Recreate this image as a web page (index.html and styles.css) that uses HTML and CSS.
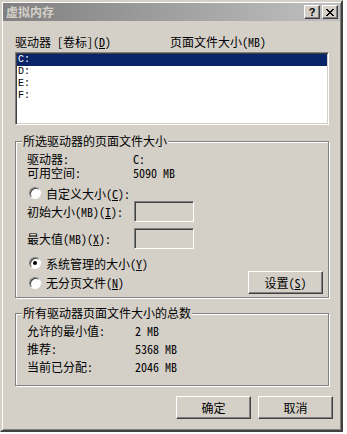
FILE: index.html
```html
<!DOCTYPE html>
<html lang="zh-CN">
<head>
    <meta charset="UTF-8">
    <title>虚拟内存</title>
    <link rel="stylesheet" href="styles.css">
</head>
<body>
    <div class="window">
        <div class="titlebar">
            <span class="title">虚拟内存</span>
            <div class="title-buttons">
                <span class="tbtn help">?</span>
                <span class="tbtn close">
                    <svg width="8" height="7" viewBox="0 0 8 7">
                        <path d="M0 0h2v1h1v1h2v-1h1v-1h2v1h-1v1h-1v1h-1v1h1v1h1v1h1v1h-2v-1h-1v-1h-2v1h-1v1h-2v-1h1v-1h1v-1h1v-1h-1v-1h-1v-1h-1z" fill="#000"/>
                    </svg>
                </span>
            </div>
        </div>

        <div class="content">
            <div class="list-head">
                <span class="col-drive">驱动器 [卷标](<u>D</u>)</span>
                <span class="col-size">页面文件大小(MB)</span>
            </div>
            <ul class="drive-list">
                <li class="selected">C:</li>
                <li>D:</li>
                <li>E:</li>
                <li>F:</li>
            </ul>

            <div class="group group-drive">
                <span class="legend">所选驱动器的页面文件大小</span>
                <div class="info-row"><span class="key">驱动器:</span><span class="val">C:</span></div>
                <div class="info-row"><span class="key">可用空间:</span><span class="val">5090 MB</span></div>
                <div class="radio-row custom">
                    <span class="radio"></span>
                    <span>自定义大小(<u>C</u>):</span>
                </div>
                <div class="field-row">
                    <span class="key">初始大小(MB)(<u>I</u>):</span>
                    <span class="textbox"></span>
                </div>
                <div class="field-row max">
                    <span class="key">最大值(MB)(<u>X</u>):</span>
                    <span class="textbox"></span>
                </div>
                <div class="radio-row system">
                    <span class="radio checked"></span>
                    <span>系统管理的大小(<u>Y</u>)</span>
                </div>
                <div class="last-row">
                    <div class="radio-row">
                        <span class="radio"></span>
                        <span>无分页文件(<u>N</u>)</span>
                    </div>
                    <span class="btn set-btn">设置(<u>S</u>)</span>
                </div>
            </div>

            <div class="group group-total">
                <span class="legend">所有驱动器页面文件大小的总数</span>
                <div class="total-row"><span class="key">允许的最小值:</span><span class="val">2 MB</span></div>
                <div class="total-row"><span class="key">推荐:</span><span class="val">5368 MB</span></div>
                <div class="total-row"><span class="key">当前已分配:</span><span class="val">2046 MB</span></div>
            </div>

            <div class="dialog-buttons">
                <span class="btn">确定</span>
                <span class="btn">取消</span>
            </div>
        </div>
    </div>
</body>
</html>
```

FILE: styles.css
```css
body {
    margin: 0;
    background-color: #fff;
    font-family: "Noto Sans Mono CJK SC", "Noto Sans CJK SC", sans-serif;
    font-size: 12px;
    color: #000;
}

u {
    text-decoration: underline;
    text-underline-offset: 1px;
}

.window {
    width: 343px;
    height: 432px;
    box-sizing: border-box;
    padding: 1px;
    background-color: #d4d0c8;
    border: 2px solid;
    border-color: #d4d0c8 #404040 #404040 #d4d0c8;
    box-shadow: inset 1px 1px 0 #fff, inset -1px -1px 0 #808080;
}

/* title bar (inactive) */
.titlebar {
    height: 18px;
    display: flex;
    align-items: center;
    justify-content: space-between;
    padding: 0 2px 0 3px;
    background: linear-gradient(to right, #808080, #c0c0c0);
}

.title {
    color: #d4d0c8;
    font-weight: bold;
    line-height: 18px;
}

.title-buttons {
    display: flex;
    gap: 2px;
}

.tbtn {
    width: 16px;
    height: 14px;
    box-sizing: border-box;
    display: flex;
    align-items: center;
    justify-content: center;
    background-color: #d4d0c8;
    border: 1px solid;
    border-color: #fff #404040 #404040 #fff;
    box-shadow: inset -1px -1px 0 #808080;
}

.tbtn.help {
    font-family: "Liberation Sans", sans-serif;
    font-weight: bold;
    font-size: 11px;
    line-height: 12px;
}

.content {
    padding: 0 11px 0 12px;
}

/* drive list */
.list-head {
    display: flex;
    margin-top: 14px;
    line-height: 14px;
}

.col-drive {
    width: 155px;
}

.drive-list {
    list-style: none;
    margin: 3px 0 0;
    padding: 1px;
    height: 73px;
    box-sizing: border-box;
    background-color: #fff;
    border: 1px solid;
    border-color: #808080 #fff #fff #808080;
    box-shadow: inset 1px 1px 0 #404040, inset -1px -1px 0 #d4d0c8;
}

.drive-list li {
    height: 12px;
    line-height: 12px;
    font-family: "Liberation Mono", monospace;
    font-size: 10px;
    padding-left: 1px;
}

.drive-list li.selected {
    background-color: #0a246a;
    color: #fff;
}

/* group boxes */
.group {
    position: relative;
    border: 1px solid #808080;
    box-shadow: inset 1px 1px 0 #fff, 1px 1px 0 #fff;
    padding-left: 11px;
}

.legend {
    position: absolute;
    top: -8px;
    left: 6px;
    padding: 0 1px;
    line-height: 14px;
    background-color: #d4d0c8;
}

.group-drive {
    margin-top: 16px;
    height: 157px;
    box-sizing: border-box;
    padding-top: 10px;
    padding-right: 5px;
}

.info-row {
    display: flex;
    line-height: 14px;
}

.info-row .key {
    width: 106px;
}

.radio-row {
    display: flex;
    align-items: center;
    height: 16px;
    gap: 5px;
    padding-left: 2px;
}

.radio-row.custom {
    margin-top: 5px;
}

.radio {
    position: relative;
    width: 12px;
    height: 12px;
    box-sizing: border-box;
    border-radius: 50%;
    background-color: #fff;
    border: 1px solid;
    border-color: #808080 #fff #fff #808080;
    box-shadow: inset 1px 1px 0 #404040;
}

.radio.checked::after {
    content: "";
    position: absolute;
    left: 3px;
    top: 3px;
    width: 4px;
    height: 4px;
    border-radius: 50%;
    background-color: #000;
}

.field-row {
    display: flex;
    align-items: center;
    height: 21px;
}

.field-row.max {
    margin-top: 6px;
}

.field-row .key {
    width: 107px;
}

.textbox {
    width: 60px;
    height: 21px;
    box-sizing: border-box;
    background-color: #d4d0c8;
    border: 1px solid;
    border-color: #808080 #fff #fff #808080;
    box-shadow: inset 1px 1px 0 #404040, inset -1px -1px 0 #d4d0c8;
}

.radio-row.system {
    margin-top: 6px;
}

.last-row {
    display: flex;
    align-items: center;
    justify-content: space-between;
    height: 23px;
}

.btn {
    display: flex;
    align-items: center;
    justify-content: center;
    width: 75px;
    height: 23px;
    box-sizing: border-box;
    background-color: #d4d0c8;
    border: 1px solid;
    border-color: #fff #404040 #404040 #fff;
    box-shadow: inset -1px -1px 0 #808080;
}

.group-total {
    margin-top: 15px;
    height: 73px;
    box-sizing: border-box;
    padding-top: 8px;
}

.total-row {
    display: flex;
    line-height: 18px;
}

.total-row .key {
    width: 108px;
}

.dialog-buttons {
    display: flex;
    justify-content: flex-end;
    gap: 7px;
    margin: 10px -4px 0 0;
}
```
